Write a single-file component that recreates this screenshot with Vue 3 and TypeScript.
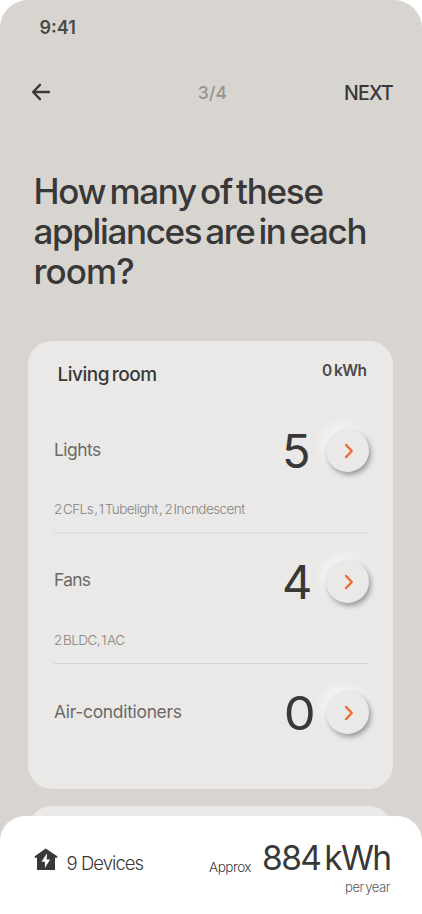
<script setup lang="ts">
interface Appliance {
  id: string
  name: string
  count: number
  detail?: string
}

const appliances: Appliance[] = [
  { id: 'lights', name: 'Lights', count: 5, detail: '2 CFLs , 1 Tubelight ,  2 Incndescent' },
  { id: 'fans', name: 'Fans', count: 4, detail: '2 BLDC, 1 AC' },
  { id: 'ac', name: 'Air-conditioners', count: 0 },
]
</script>

<template>
  <main class="screen">
    <div class="status"><span class="time">9:41</span></div>

    <nav class="nav">
      <button class="back" aria-label="Back">
        <svg width="20" height="18" viewBox="0 0 20 18">
          <path d="M18 9H2.200M9 1.900 2.100 9l6.900 7.100" />
        </svg>
      </button>
      <span class="step">3/4</span>
      <button class="next">NEXT</button>
    </nav>

    <h1 class="title">
      <span class="l1">How many of these</span>
      <span class="l2">appliances are in each</span>
      <span class="l3">room?</span>
    </h1>

    <section class="card">
      <header class="card-head">
        <h2 class="room">Living room</h2>
        <span class="usage">0 kWh</span>
      </header>
      <div v-for="item in appliances" :key="item.id" class="row" :class="item.id">
        <div class="main">
          <span class="name">{{ item.name }}</span>
          <span class="count">{{ item.count }}</span>
          <button class="go" :aria-label="item.name">
            <svg width="10" height="16" viewBox="0 0 10 16">
              <path d="M2 1.900 7.800 8 2 14.100" />
            </svg>
          </button>
        </div>
        <p v-if="item.detail" class="detail">{{ item.detail }}</p>
      </div>
    </section>

    <section class="card peek"></section>

    <footer class="sheet">
      <svg class="house" width="24" height="23" viewBox="0 0 24 23">
        <path class="body" d="M11.700.500 23.300 8.300v1.500h-2.300V22H3V9.800H.700V8.300z" />
        <path class="bolt" d="M13 5.200 7.500 13.700h3.400v6.400l5.200-8.700h-3.500z" />
      </svg>
      <span class="devices">9 Devices</span>
      <span class="approx">Approx</span>
      <div class="total">
        <span class="amount">884 kWh</span>
        <span class="period">per year</span>
      </div>
    </footer>
  </main>
</template>

<style>
body {
  background: #fff;
  overflow: hidden;
}
</style>

<style scoped>
.screen {
  width: 422px;
  height: 914px;
  box-sizing: border-box;
  overflow: hidden;
  display: flex;
  flex-direction: column;
  border-radius: 28px 28px 0 0;
  background: linear-gradient(#d8d5d0 0 860px, #fff 860px);
  color: #383838;
  font-family: Inter, 'Liberation Sans', sans-serif;
  white-space: pre;
}
button {
  padding: 0;
  border: 0;
  background: none;
  color: inherit;
  font: inherit;
}
svg {
  display: block;
  fill: none;
  stroke-linecap: round;
  stroke-linejoin: round;
}
.status {
  flex: none;
  height: 56px;
  box-sizing: border-box;
  padding: 18px 0 0 39.500px;
}
.time {
  display: block;
  font-size: 18px;
  line-height: 20px;
  font-weight: 600;
  color: #4a4a4a;
}
.nav {
  flex: none;
  height: 72px;
  display: grid;
  grid-template-columns: 1fr auto 1fr;
  align-items: center;
  padding: 0 29px 0 31px;
}
.back svg {
  stroke: #383838;
  stroke-width: 2.300;
}
.step {
  padding-left: 1px;
  font-size: 17.500px;
  letter-spacing: 0.200px;
  font-weight: 500;
  color: #949391;
}
.next {
  justify-self: end;
  padding-top: 2px;
  font-size: 19.500px;
  font-weight: 500;
  letter-spacing: -0.800px;
}
.title {
  flex: none;
  display: flex;
  flex-direction: column;
  height: 170px;
  margin: 43px 0 0 33.500px;
  font-size: 35px;
  line-height: 40px;
  font-weight: 500;
  word-spacing: -4px;
}
.l1 {
  letter-spacing: -1.260px;
}
.l2 {
  letter-spacing: -1.360px;
}
.l3 {
  letter-spacing: -0.900px;
}
.card {
  flex: none;
  height: 448px;
  box-sizing: border-box;
  margin: 0 29px 0 28px;
  padding: 0 24px 0 26px;
  border-radius: 24px;
  background: #eae9e7;
}
.card-head {
  display: flex;
  justify-content: space-between;
  height: 61px;
  padding: 0 2.500px 0 3.500px;
}
.room {
  margin: 24px 0 0;
  font-size: 19px;
  line-height: 20px;
  font-weight: 500;
  letter-spacing: -0.480px;
  word-spacing: -2px;
}
.usage {
  margin-top: 20px;
  font-size: 15.500px;
  line-height: 20px;
  font-weight: 600;
  letter-spacing: -0.550px;
  word-spacing: -1px;
  color: #4a4a4a;
}
.row {
  height: 131px;
  box-sizing: border-box;
}
.row.lights {
  height: 132px;
  padding-top: 27px;
  border-bottom: 2px solid #dfdedc;
}
.row.fans {
  height: 130px;
  padding-top: 26px;
  border-bottom: 1px solid #d5d4d1;
}
.row.ac {
  padding-top: 27px;
}
.main {
  display: grid;
  grid-template-columns: 1fr 44px 43px;
  align-items: center;
  height: 43px;
}
.name {
  margin-top: -1px;
  font-size: 17.400px;
  line-height: 20px;
  letter-spacing: -0.500px;
  color: #6a6968;
}
.fans .name {
  margin-top: -3px;
  letter-spacing: -0.700px;
}
.ac .name {
  margin-top: -2px;
  letter-spacing: -0.280px;
}
.count {
  font-size: 47px;
  line-height: 43px;
}
.ac .count {
  justify-self: start;
  margin-left: 3px;
  transform: scaleX(1.080);
}
.go {
  width: 43px;
  height: 43px;
  display: flex;
  align-items: center;
  justify-content: center;
  border-radius: 50%;
  background: #eae9e7;
  box-shadow:
    2px 3px 5px rgba(0, 0, 0, 0.340),
    -5px -5px 12px rgba(255, 255, 255, 0.550);
}
.go svg {
  margin-left: 2px;
  stroke: #ee6b35;
  stroke-width: 2.300;
}
.detail {
  margin: 27px 0 0;
  font-size: 13.500px;
  line-height: 20px;
  font-weight: 300;
  letter-spacing: -0.560px;
  word-spacing: -2px;
  color: #858483;
}
.peek {
  height: 108px;
  margin-top: 17px;
}
.sheet {
  flex: none;
  display: flex;
  height: 98px;
  box-sizing: border-box;
  margin-top: -98px;
  padding: 0 32px 0 33.500px;
  border-radius: 25px 25px 0 0;
  background: #fff;
  z-index: 1;
}
.house {
  margin-top: 32px;
}
.body {
  fill: #383838;
}
.bolt {
  fill: #fff;
}
.devices {
  margin: 37px 0 0 9px;
  font-size: 18.500px;
  line-height: 20px;
  font-weight: 300;
  letter-spacing: -0.950px;
}
.approx {
  margin: 41px 11px 0 auto;
  font-size: 13.500px;
  line-height: 20px;
  letter-spacing: -0.480px;
  font-weight: 300;
}
.total {
  display: flex;
  flex-direction: column;
  align-items: flex-end;
}
.amount {
  margin: 22px -0.600px 0 0;
  font-size: 33.500px;
  line-height: 40px;
  letter-spacing: -1.600px;
  word-spacing: -4px;
}
.period {
  margin-top: -1px;
  font-size: 13px;
  line-height: 20px;
  font-weight: 300;
  letter-spacing: -0.400px;
  word-spacing: -2px;
  color: #5a5a5a;
}
</style>
